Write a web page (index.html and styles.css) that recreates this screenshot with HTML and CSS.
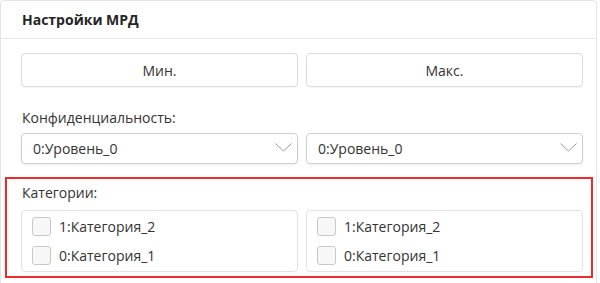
FILE: index.html
```html
<!DOCTYPE html>
<html lang="ru">
<head>
  <meta charset="UTF-8">
  <meta name="viewport" content="width=device-width, initial-scale=1.0">
  <title>Настройки МРД</title>
  <link rel="stylesheet" href="styles.css">
</head>
<body>
  <div class="panel">
    <div class="panel-head">Настройки МРД</div>
    <div class="panel-body">
      <div class="pair">
        <button class="btn">Мин.</button>
        <button class="btn">Макс.</button>
      </div>

      <div class="label conf-label">Конфиденциальность:</div>
      <div class="pair">
        <div class="select">
          <span>0:Уровень_0</span>
          <svg width="17" height="9" viewBox="0 0 17 9"><path d="M0.5 0.5 L8.5 8 L16.5 0.5" fill="none" stroke="#9a9a9a" stroke-width="1"/></svg>
        </div>
        <div class="select">
          <span>0:Уровень_0</span>
          <svg width="17" height="9" viewBox="0 0 17 9"><path d="M0.5 0.5 L8.5 8 L16.5 0.5" fill="none" stroke="#9a9a9a" stroke-width="1"/></svg>
        </div>
      </div>

      <div class="categories">
        <div class="label cat-label">Категории:</div>
        <div class="pair">
          <div class="group">
            <label class="check"><span class="box"></span>1:Категория_2</label>
            <label class="check"><span class="box"></span>0:Категория_1</label>
          </div>
          <div class="group">
            <label class="check"><span class="box"></span>1:Категория_2</label>
            <label class="check"><span class="box"></span>0:Категория_1</label>
          </div>
        </div>
      </div>
    </div>
  </div>
</body>
</html>
```

FILE: styles.css
```css
html, body { overflow: hidden; }
body { margin: 0; background: #fff; font-family: "Open Sans", "Noto Sans", sans-serif; color: #333; font-size: 14px; }
.panel { width: 597px; height: 290px; box-sizing: border-box; border: 1px solid #e4e4e4; border-radius: 4px; }
.panel-head { height: 37px; border-bottom: 1px solid #e8e8e8; padding-left: 21px; font-size: 14px; font-weight: 700; color: #262626; line-height: 38px; }
.panel-body { padding: 14px 13px 0 20px; }
.pair { display: grid; grid-template-columns: 277px 277px; gap: 8px; }
.btn { height: 34px; background: #fff; border: 1px solid #dcdcdc; border-radius: 4px; font: inherit; font-size: 14px; color: #333; box-shadow: 0 1px 1px rgba(0,0,0,0.04); }
.label { line-height: 18px; font-size: 14px; padding-left: 1px; }
.conf-label { margin: 22px 0 6px; }
.select { height: 31px; box-sizing: border-box; border: 1px solid #cfcfcf; border-radius: 4px; display: flex; align-items: center; justify-content: space-between; padding: 0 5px 0 11px; font-size: 14px; box-shadow: 0 1px 2px rgba(0,0,0,0.08); }
.select svg { margin-top: -2px; }
.categories { margin: 13px 0 0 -16px; width: 588px; box-sizing: border-box; border: 2px solid #ee2b2b; padding: 5px 8px 4px 14px; }
.cat-label { margin-bottom: 8px; }
.group { height: 62px; box-sizing: border-box; border: 1px solid #e2e2e2; border-radius: 4px; padding: 6px 10px 0; display: flex; flex-direction: column; gap: 10px; }
.check { display: flex; align-items: center; gap: 8px; height: 19px; font-size: 14px; }
.box { width: 19px; height: 19px; box-sizing: border-box; border: 1px solid #c8c8c8; border-radius: 3px; background: #f7f7f7; }
```
